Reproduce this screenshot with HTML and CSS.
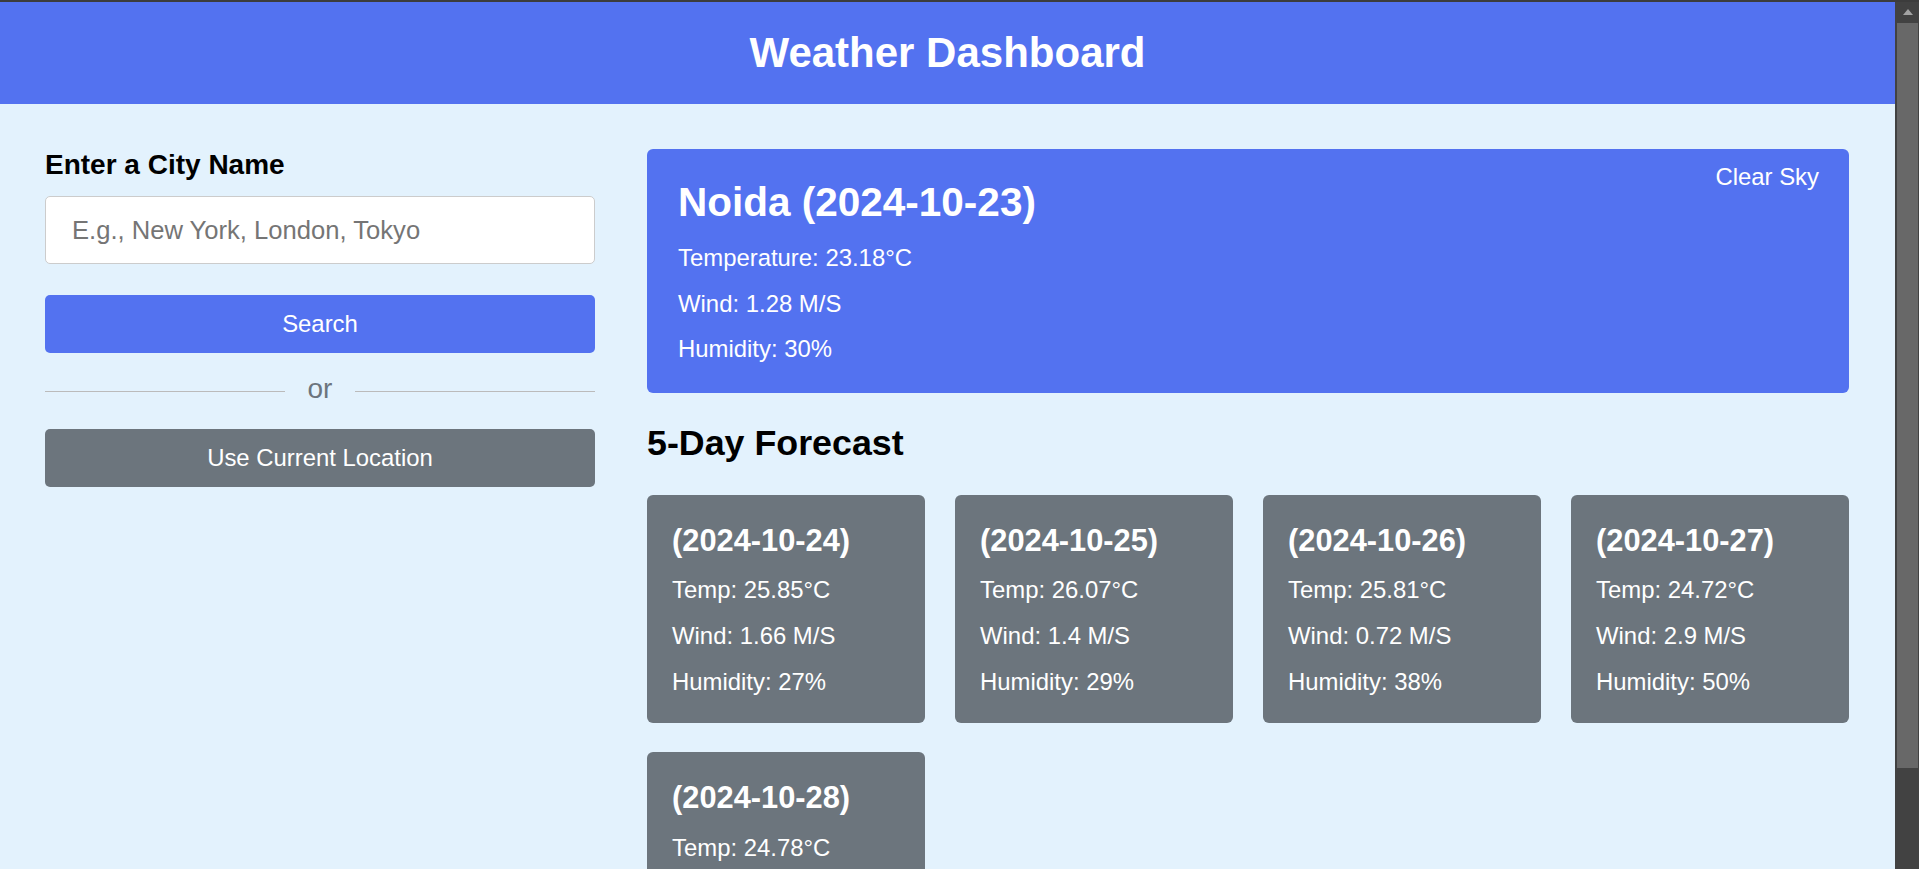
FILE: index.html
```html
<!DOCTYPE html>
<html lang="en">
<head>
<meta charset="utf-8">
<title>Weather Dashboard</title>
<link rel="stylesheet" href="styles.css">
</head>
<body>
<div class="window">
  <div class="viewport">
    <header class="topbar">
      <h1>Weather Dashboard</h1>
    </header>
    <main class="container">
      <section class="search">
        <h3 class="label">Enter a City Name</h3>
        <input class="city-input" type="text" placeholder="E.g., New York, London, Tokyo">
        <button class="btn btn-search" type="button">Search</button>
        <div class="separator"><span class="sep-line"></span><span class="sep-text">or</span><span class="sep-line"></span></div>
        <button class="btn btn-location" type="button">Use Current Location</button>
      </section>
      <section class="weather">
        <div class="current">
          <div class="details">
            <h2>Noida (2024-10-23)</h2>
            <p>Temperature: 23.18°C</p>
            <p>Wind: 1.28 M/S</p>
            <p>Humidity: 30%</p>
          </div>
          <div class="sky">Clear Sky</div>
        </div>
        <h2 class="forecast-title">5-Day Forecast</h2>
        <ul class="cards">
          <li class="card">
            <h3>(2024-10-24)</h3>
            <p>Temp: 25.85°C</p>
            <p>Wind: 1.66 M/S</p>
            <p>Humidity: 27%</p>
          </li>
          <li class="card">
            <h3>(2024-10-25)</h3>
            <p>Temp: 26.07°C</p>
            <p>Wind: 1.4 M/S</p>
            <p>Humidity: 29%</p>
          </li>
          <li class="card">
            <h3>(2024-10-26)</h3>
            <p>Temp: 25.81°C</p>
            <p>Wind: 0.72 M/S</p>
            <p>Humidity: 38%</p>
          </li>
          <li class="card">
            <h3>(2024-10-27)</h3>
            <p>Temp: 24.72°C</p>
            <p>Wind: 2.9 M/S</p>
            <p>Humidity: 50%</p>
          </li>
          <li class="card">
            <h3>(2024-10-28)</h3>
            <p>Temp: 24.78°C</p>
            <p>Wind: 1.9 M/S</p>
            <p>Humidity: 48%</p>
          </li>
        </ul>
      </section>
    </main>
  </div>
  <div class="scrollbar" aria-hidden="true">
    <div class="sb-arrow"><span class="sb-tri"></span></div>
    <div class="sb-thumb"></div>
  </div>
</div>
</body>
</html>
```

FILE: styles.css
```css
* {
  box-sizing: border-box;
}

html, body {
  margin: 0;
  padding: 0;
  height: 100%;
  overflow: hidden;
}

body {
  font-family: "Liberation Sans", Arial, sans-serif;
  background: #424242;
}

.window {
  display: flex;
  height: 100vh;
  border-top: 2px solid #3c3c3c;
  overflow: hidden;
}

.viewport {
  flex: 1;
  min-width: 0;
  overflow: hidden;
  background: #e3f2fd;
}

/* header */
.topbar {
  background: #5372f0;
  padding: 26.5px 0 26.9px;
}

.topbar h1 {
  margin: 0;
  text-align: center;
  color: #fff;
  font-size: 42px;
  line-height: 48.3px;
  font-weight: 700;
}

/* layout */
.container {
  display: flex;
  gap: 52px;
  padding: 45px 46px 45px 45px;
  align-items: flex-start;
}

.search {
  width: 550px;
  flex: none;
  display: flex;
  flex-direction: column;
}

.label {
  margin: 0;
  font-size: 28px;
  line-height: 32.2px;
  font-weight: 700;
  color: #000;
}

.city-input {
  margin: 15.6px 0 31px;
  height: 68px;
  width: 100%;
  padding: 0 26px;
  border: 1px solid #ccc;
  border-radius: 5px;
  background: #fff;
  font-family: inherit;
  font-size: 25.6px;
  color: #000;
  outline: none;
}

.city-input::placeholder {
  color: #757575;
}

.btn {
  display: block;
  width: 100%;
  height: 58px;
  border: none;
  border-radius: 5px;
  color: #fff;
  font-family: inherit;
  font-size: 23.9px;
  cursor: pointer;
}

.btn-search {
  background: #5372f0;
}

.btn-location {
  background: #6c757d;
}

.separator {
  display: flex;
  align-items: center;
  height: 1px;
  margin: 37.5px 0 37px;
}

.sep-line {
  flex: 1;
  height: 1px;
  background: #bbb;
}

.sep-text {
  padding: 0 23px;
  margin-top: -5px;
  font-size: 28px;
  line-height: 31px;
  color: #6c757d;
}

/* right column */
.weather {
  flex: 1;
  min-width: 0;
  padding-top: 0.7px;
}

.current {
  display: flex;
  justify-content: space-between;
  align-items: flex-start;
  padding: 14px 30px 11.8px 31px;
  background: #5372f0;
  border-radius: 6px;
  color: #fff;
}

.details {
  padding-top: 15.4px;
}

.details h2 {
  margin: 0 0 18.8px;
  font-size: 40.5px;
  line-height: 46.5px;
  font-weight: 700;
}

.details p,
.card p {
  margin: 18.4px 0;
  font-size: 23.9px;
  line-height: 27.3px;
}

.sky {
  font-size: 23.9px;
  line-height: 27.3px;
}

.forecast-title {
  margin: 30px 0 30.8px;
  font-size: 35.8px;
  line-height: 41.2px;
  font-weight: 700;
  color: #000;
}

.cards {
  list-style: none;
  margin: 0;
  padding: 0;
  display: grid;
  grid-template-columns: repeat(4, 1fr);
  column-gap: 30px;
  row-gap: 29px;
}

.card {
  padding: 9.4px 25px 9.7px;
  background: #6c757d;
  border-radius: 6px;
  color: #fff;
}

.card h3 {
  margin: 18.3px 0 18.4px;
  font-size: 30.8px;
  line-height: 35.4px;
  font-weight: 700;
}

/* decorative scrollbar */
.scrollbar {
  width: 24px;
  flex: none;
  background: #424242;
  display: flex;
  flex-direction: column;
  padding: 0 1px 0 2px;
}

.sb-arrow {
  height: 20px;
  display: flex;
  align-items: center;
  justify-content: center;
}

.sb-tri {
  width: 0;
  height: 0;
  border-left: 5.5px solid transparent;
  border-right: 5.5px solid transparent;
  border-bottom: 6px solid #a3a3a3;
}

.sb-thumb {
  margin-top: 1px;
  height: 745px;
  background: #686868;
}
```
